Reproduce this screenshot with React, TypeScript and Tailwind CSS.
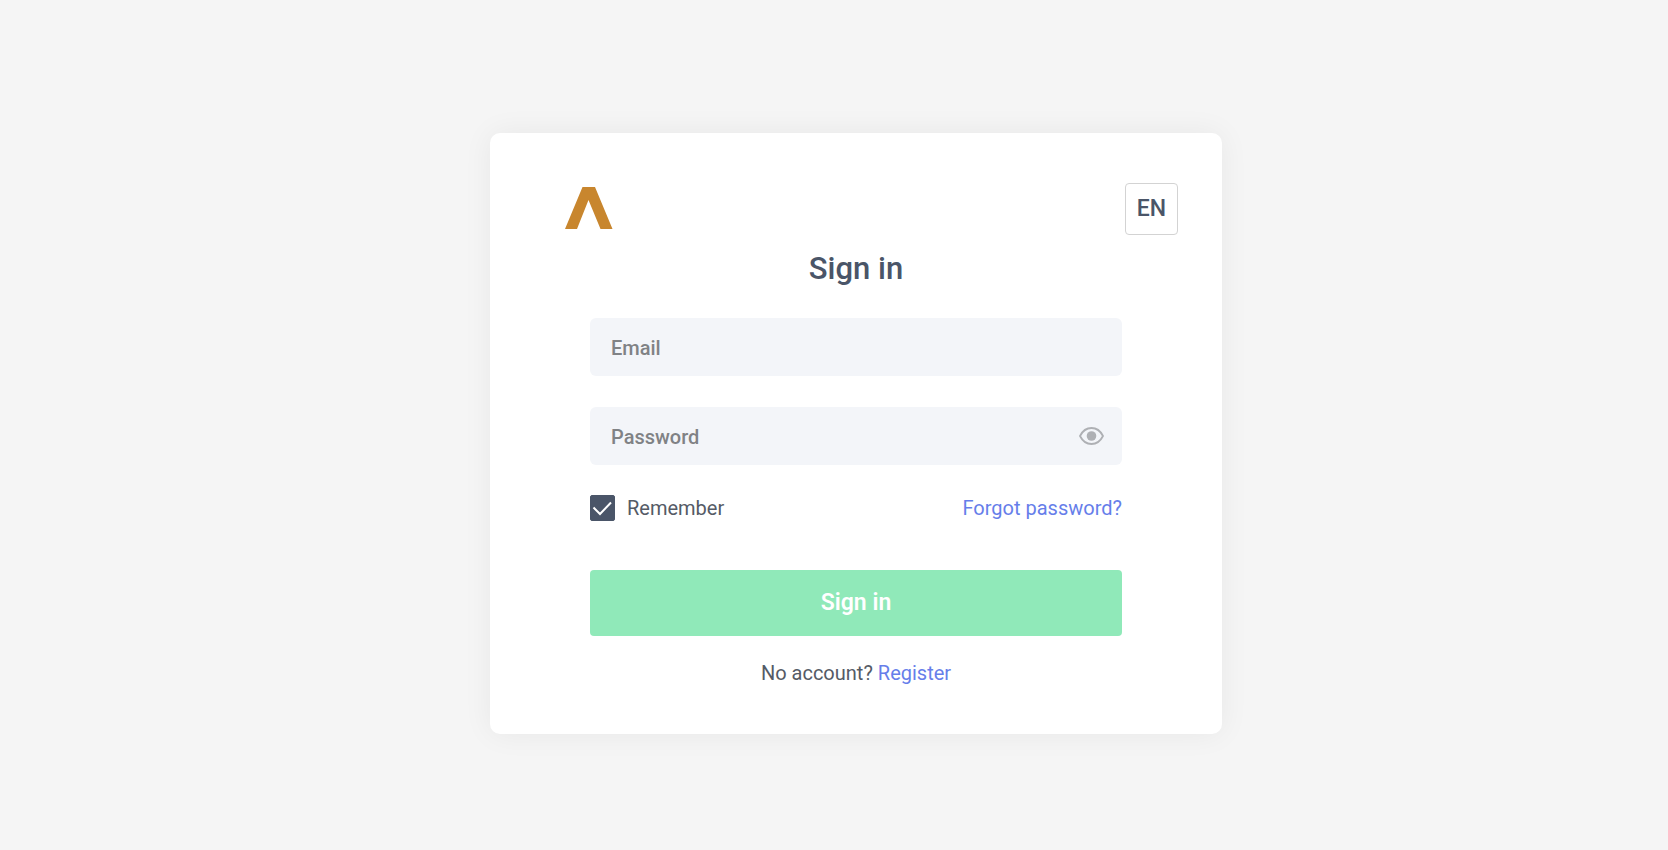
import { useState } from "react";

export default function App() {
    const [showPassword, setShowPassword] = useState(false);

    return (
        <div className="min-h-screen flex justify-center items-center bg-[#f5f5f5] pl-11 pt-[17px] font-['Roboto',sans-serif] text-[#4a5568]">
            <main className="w-full max-w-[732px] bg-white rounded-[10px] shadow-[0_0_30px_rgba(0,0,0,0.06)] pt-[50px] pb-12">
                <header className="flex items-start justify-between pl-[75px] pr-11">
                    <svg className="w-12 h-[42px] mt-1" viewBox="0 0 48 42" role="img" aria-label="Logo">
                        <path d="M17.5 0H30L47.5 42H35.5L23.5 13L12 42H0Z" fill="#c8862e" />
                    </svg>
                    <button
                        type="button"
                        className="w-[53px] h-[52px] rounded border border-[#d3d3d3] text-[23px] font-medium"
                    >
                        EN
                    </button>
                </header>

                <form className="px-[100px]" onSubmit={(e) => e.preventDefault()}>
                    <h1 className="mt-4 mb-[31px] text-center text-[31px] leading-9 font-medium">Sign in</h1>

                    <input
                        type="email"
                        aria-label="Email"
                        placeholder="Email"
                        className="block w-full h-[58px] rounded-md bg-[#f3f5f9] px-[21px] pt-0.5 text-[20px] font-medium placeholder:text-[#808285] outline-none"
                    />

                    <div className="relative mt-[31px]">
                        <input
                            type={showPassword ? "text" : "password"}
                            aria-label="Password"
                            placeholder="Password"
                            className="block w-full h-[58px] rounded-md bg-[#f3f5f9] pl-[21px] pr-14 pt-0.5 text-[20px] font-medium placeholder:text-[#808285] outline-none"
                        />
                        <button
                            type="button"
                            aria-label="Show password"
                            onClick={() => setShowPassword(!showPassword)}
                            className="absolute right-[18px] inset-y-0 my-auto h-[18px]"
                        >
                            <svg className="w-[25px] h-[18px]" viewBox="0 0 25 18" fill="none">
                                <path
                                    d="M1 9C3.5 4 7.6 1 12.5 1S21.5 4 24 9C21.5 14 17.4 17 12.5 17S3.5 14 1 9Z"
                                    stroke="#aeb0b4"
                                    strokeWidth="1.8"
                                    strokeLinejoin="round"
                                />
                                <circle cx="12.5" cy="9" r="4.8" fill="#aeb0b4" />
                            </svg>
                        </button>
                    </div>

                    <div className="flex items-center justify-between mt-[30px] text-[20px] leading-[26px]">
                        <label className="flex items-center gap-3 text-[#555b66]">
                            <span className="grid">
                                <input
                                    type="checkbox"
                                    defaultChecked
                                    className="peer col-start-1 row-start-1 appearance-none w-[25px] h-[26px] rounded-xs border border-[#4a5568] checked:bg-[#4a5568]"
                                />
                                <svg
                                    className="col-start-1 row-start-1 w-[25px] h-[26px] pointer-events-none invisible peer-checked:visible"
                                    viewBox="0 0 25 26"
                                    fill="none"
                                >
                                    <path d="M3.5 12.5L10 19L21 7.5" stroke="#fff" strokeWidth="2" />
                                </svg>
                            </span>
                            Remember
                        </label>
                        <a href="#forgot" className="text-[#667eea]">
                            Forgot password?
                        </a>
                    </div>

                    <button
                        type="submit"
                        className="block w-full h-[66px] mt-[49px] rounded bg-[#90e9b9] text-white text-[23px] font-semibold"
                    >
                        Sign in
                    </button>

                    <p className="mt-6 text-center text-[20px] leading-[26px] text-[#555b66]">
                        No account?{" "}
                        <a href="#register" className="text-[#667eea]">
                            Register
                        </a>
                    </p>
                </form>
            </main>
        </div>
    );
}
